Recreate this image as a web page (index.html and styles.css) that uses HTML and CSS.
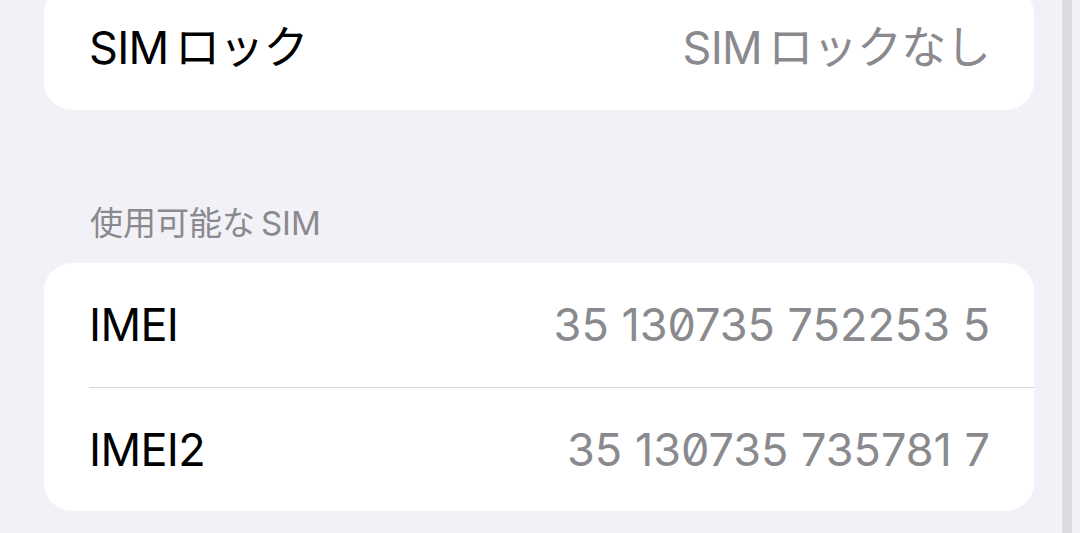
FILE: index.html
```html
<!DOCTYPE html>
<html>
<head>
    <title>SIM</title>
    <link rel="stylesheet" href="styles.css">
</head>
<body>
    <div class="screen">
        <div class="content">
            <div class="group group-top">
                <div class="row">
                    <span class="label"><span class="latin">SIM</span>ロック</span>
                    <span class="value"><span class="latin">SIM</span>ロックなし</span>
                </div>
            </div>

            <div class="section-header">使用可能な<span class="latin-after">SIM</span></div>
            <div class="group">
                <div class="row">
                    <span class="label">IMEI</span>
                    <span class="value number">35 130735 752253 5</span>
                </div>
                <div class="row">
                    <span class="label">IMEI2</span>
                    <span class="value number">35 130735 735781 7</span>
                </div>
            </div>
        </div>
        <div class="divider"></div>
    </div>
</body>
</html>
```

FILE: styles.css
```css
html, body {
    margin: 0;
    height: 100%;
    overflow: hidden;
}

body {
    font-family: Inter, "Noto Sans CJK JP", sans-serif;
    background-color: #f2f1f7;
    color: #000;
}

.screen {
    display: flex;
    height: 100%;
}

.content {
    flex: 1;
    padding: 0 27px 0 44px;
}

.divider {
    width: 10px;
    margin-right: 8px;
    background-color: #dcdbe1;
    border-left: 1px solid #f8f8fb;
}

.group {
    background-color: #fff;
    border-radius: 28px;
    overflow: hidden;
}

.group-top {
    margin-top: -14px;
}

.row {
    display: flex;
    justify-content: space-between;
    align-items: center;
    height: 124px;
    margin-left: 45px;
    padding-right: 44px;
    font-size: 45px;
    line-height: 56px;
}

.row + .row {
    height: 123px;
    border-top: 1px solid #d5d5d9;
}

.label,
.value {
    letter-spacing: -0.015em;
}

.latin {
    margin-right: 0.14em;
}

.latin-after {
    margin-left: 0.18em;
}

.value {
    color: #8a8a8e;
}

.number {
    font-feature-settings: "zero" 1;
    letter-spacing: 0;
}

.section-header {
    padding: 93px 0 20px 46px;
    font-size: 33px;
    line-height: 40px;
    color: #8a8a8e;
}
```
